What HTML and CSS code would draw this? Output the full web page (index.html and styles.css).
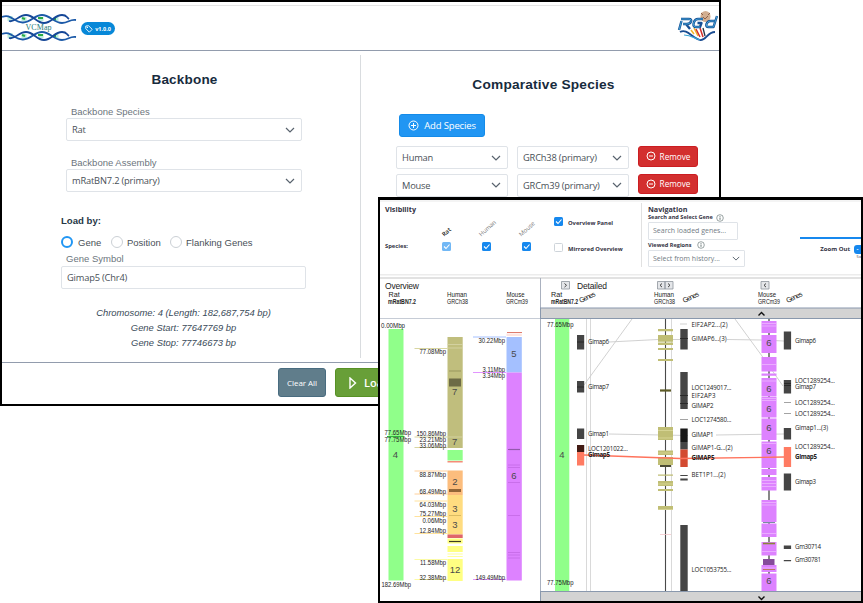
FILE: index.html
```html
<!DOCTYPE html>
<html lang="en">
<head>
<meta charset="utf-8">
<title>VCMap</title>
<link rel="stylesheet" href="styles.css">
</head>
<body>
<svg width="0" height="0" class="defs">
  <symbol id="chev" viewBox="0 0 10 6"><path d="M1 1l4 4 4-4" fill="none" stroke="#59636e" stroke-width="1.2"/></symbol>
  <symbol id="info" viewBox="0 0 8 8"><circle cx="4" cy="4" r="3.3" fill="none" stroke="#566" stroke-width=".6"/><path d="M4 3.5v2.3M4 2v.8" stroke="#455" stroke-width=".8"/></symbol>
  <symbol id="minus" viewBox="0 0 10 10"><circle cx="5" cy="5" r="4" fill="none" stroke="#fff"/><path d="M3 5h4" stroke="#fff"/></symbol>
  <symbol id="dna" viewBox="0 0 75 10">
    <path d="M8 2v5M22 3v4M39 3v4M54 3v4" stroke="#b9ecdc" stroke-width="5"/>
    <path d="M20 4l3 1M36 4h5M53 3v3" stroke="#2aaa44" stroke-width="2"/>
    <path d="M0 3C9-1 12 9 21 8.500S32 1 40 1 52 9 60 9c7 0 7-4 14-3" fill="none" stroke="#1c5aa8" stroke-width="1.800"/>
    <path d="M7 7C13 9 16 1 24 1s10 8 18 8S52 1 60 1c5 0 4 2 7 4" fill="none" stroke="#164797" stroke-width="1.800"/>
  </symbol>
</svg>

<main class="window config">
  <header class="topbar">
    <div class="brand">
      <svg class="logo" width="75" height="28" viewBox="0 0 75 28">
        <use href="#dna" y="0" width="75" height="10"/>
        <use href="#dna" y="17" width="75" height="10"/>
        <text x="23.500" y="16" textLength="26" class="logo-text">VCMap</text>
      </svg>
      <span class="version">
        <svg width="8" height="8" viewBox="0 0 8 8"><path d="M.8 1v2.600L4.300 7.200l2.900-2.900L3.600.8z" fill="none" stroke="#fff" stroke-width=".9" stroke-linejoin="round"/><circle cx="2.400" cy="2.400" r=".6" fill="#fff"/></svg>
        v1.0.0
      </span>
    </div>
    <svg class="rgd" width="42" height="32" viewBox="0 0 42 32">
      <ellipse cx="28.500" cy="6.500" rx="5" ry="5.500" fill="#d2ae91"/>
      <path d="M24 3l2 2M33 3l-2 2M26 7l2 2 3-3" stroke="#8b604b" fill="none"/>
      <path d="M14 20l3 4M17 18l4 8" stroke="#f0b629" stroke-width="1.500"/>
      <path d="M19 19l4 8M23 18l3 9" stroke="#d22f2b" stroke-width="1.500"/>
      <path d="M26 18l2 8" stroke="#234" stroke-width="1.300"/>
      <path d="M3 22c7-4 12 6 20 8 6 1 7-8 15-8" fill="none" stroke="#1a4c91" stroke-width="1.800"/>
      <path d="M7 25c7 0 10 3 16 5" fill="none" stroke="#38a3d4" stroke-width="1.200"/>
      <g fill="none" stroke="#174f94" stroke-width="2.400" stroke-linejoin="round"><path d="M4 9h8q3 0 2 2.500t-4 2.500H6M4.500 11L2 20M9 14l4 5M26 9h-5q-3 0-4 3l-.5 2q-.5 3 2.500 3h4l1.500-4h-4M40 6l-3.500 11h-5q-3 0-2-3t4-3h4"/></g>
      <g fill="none" stroke="#4aabdc" stroke-width=".9"><path d="M4 9h8q3 0 2 2.500t-4 2.500H6M4.500 11L2 20M26 9h-5q-3 0-4 3l-.5 2q-.5 3 2.500 3h4M40 6l-3.500 11h-5q-3 0-2-3t4-3h4"/></g>
    </svg>
  </header>

  <div class="columns">
    <section class="backbone">
      <h2>Backbone</h2>
      <div class="field">
        <label>Backbone Species</label>
        <div class="select">Rat<svg width="10" height="6"><use href="#chev"/></svg></div>
      </div>
      <div class="field">
        <label>Backbone Assembly</label>
        <div class="select">mRatBN7.2 (primary)<svg width="10" height="6"><use href="#chev"/></svg></div>
      </div>
      <div class="load">
        <h3>Load by:</h3>
        <div class="radios">
          <span class="radio on"></span><span class="r1">Gene</span>
          <span class="radio"></span><span class="r2">Position</span>
          <span class="radio"></span><span>Flanking Genes</span>
        </div>
        <label>Gene Symbol</label>
        <div class="select symbol">Gimap5 (Chr4)</div>
      </div>
      <div class="summary">
        <p>Chromosome: 4 (Length: 182,687,754 bp)</p>
        <p>Gene Start: 77647769 bp</p>
        <p>Gene Stop: 77746673 bp</p>
      </div>
    </section>
    <section class="comparative">
      <h2>Comparative Species</h2>
      <button class="add"><svg width="11" height="11" viewBox="0 0 11 11"><circle cx="5.500" cy="5.500" r="4.500" fill="none" stroke="#fff"/><path d="M3 5.500h5M5.500 3v5" stroke="#fff"/></svg>Add Species</button>
      <div class="species-row">
        <div class="select">Human<svg width="10" height="6"><use href="#chev"/></svg></div>
        <div class="select">GRCh38 (primary)<svg width="10" height="6"><use href="#chev"/></svg></div>
        <button class="remove"><svg width="10" height="10"><use href="#minus"/></svg>Remove</button>
      </div>
      <div class="species-row">
        <div class="select">Mouse<svg width="10" height="6"><use href="#chev"/></svg></div>
        <div class="select">GRCm39 (primary)<svg width="10" height="6"><use href="#chev"/></svg></div>
        <button class="remove"><svg width="10" height="10"><use href="#minus"/></svg>Remove</button>
      </div>
    </section>
  </div>

  <footer class="actions">
    <button class="clear">Clear All</button>
    <button class="go"><svg width="8" height="12" viewBox="0 0 8 12"><path d="M1 1v10l5.500-5z" fill="none" stroke="#fff" stroke-width="1.400"/></svg>Load</button>
  </footer>
</main>

<section class="window browser">
  <div class="controls">
    <div class="visibility">
      <h4>Visibility</h4>
      <div class="vis-grid">
        <span></span><span class="tilt dark">Rat</span><span class="tilt">Human</span><span class="tilt">Mouse</span>
        <b>Species:</b>
        <i class="check soft"><svg viewBox="0 0 9 9"><path d="M2 4.500l2 2 3.500-4"/></svg></i>
        <i class="check"><svg viewBox="0 0 9 9"><path d="M2 4.500l2 2 3.500-4"/></svg></i>
        <i class="check"><svg viewBox="0 0 9 9"><path d="M2 4.500l2 2 3.500-4"/></svg></i>
      </div>
    </div>
    <div class="toggles">
      <div><i class="check"><svg viewBox="0 0 9 9"><path d="M2 4.500l2 2 3.500-4"/></svg></i><b>Overview Panel</b></div>
      <div><i class="check off"></i><b>Mirrored Overview</b></div>
    </div>
    <div class="navigation">
      <h4>Navigation</h4>
      <div class="cap">Search and Select Gene<svg width="8" height="8"><use href="#info"/></svg></div>
      <div class="input">Search loaded genes...</div>
      <div class="cap second">Viewed Regions<svg width="8" height="8"><use href="#info"/></svg></div>
      <div class="input wide">Select from history...<svg width="8" height="5"><use href="#chev"/></svg></div>
    </div>
    <div class="zoom">
      <div class="track"></div>
      <div class="zoom-row">Zoom Out<span>-</span></div>
      <small>5x</small>
    </div>
  </div>

  <svg class="chart" width="481" height="327" viewBox="380 274 481 327">
    <path d="M380 274.500h481" stroke="#ececec" stroke-width="2"/>
    <path d="M380 278h481" stroke="#d9d9d9" stroke-width="1.500"/>
    <g stroke="#c6ccd6"><path d="M380 318.500h160"/><path d="M540.500 278v323" stroke="#aab1bf"/></g>

    <g class="head">
      <text x="385" y="289" textLength="34" class="big">Overview</text>
      <text x="577" y="289" textLength="30" class="big">Detailed</text>
      <text x="388.500" y="297">Rat</text><text x="388" y="304" textLength="28" lengthAdjust="spacingAndGlyphs" class="s b">mRatBN7.2</text>
      <text x="447" y="297" textLength="20" lengthAdjust="spacingAndGlyphs">Human</text><text x="447" y="304" textLength="21" lengthAdjust="spacingAndGlyphs" class="s">GRCh38</text>
      <text x="506.500" y="297" textLength="18" lengthAdjust="spacingAndGlyphs">Mouse</text><text x="506" y="304" textLength="22" lengthAdjust="spacingAndGlyphs" class="s">GRCm39</text>
      <text x="551" y="297">Rat</text><text x="551" y="304" textLength="27" lengthAdjust="spacingAndGlyphs" class="s b">mRatBN7.2</text>
      <text x="654" y="297" textLength="20" lengthAdjust="spacingAndGlyphs">Human</text><text x="654" y="304" textLength="21" lengthAdjust="spacingAndGlyphs" class="s">GRCh38</text>
      <text x="758" y="297" textLength="18" lengthAdjust="spacingAndGlyphs">Mouse</text><text x="758" y="304" textLength="22" lengthAdjust="spacingAndGlyphs" class="s">GRCm39</text>
      <text transform="translate(580.500 303) rotate(-25)" textLength="17">Genes</text>
      <text transform="translate(684 303) rotate(-25)" textLength="17">Genes</text>
      <text transform="translate(787.500 303) rotate(-25)" textLength="17">Genes</text>
    </g>
    <g fill="#e4e6e9" stroke="#8e949c" stroke-width=".8"><path d="M561.500 281.500h8v7.500h-8zM657.500 281.500h7.500v7.500h-7.500zM665 281.500h8v7.500h-8zM761 281.500h8v7.500h-8z"/></g>
    <path d="M564.500 283.500l2 1.800-2 1.800M662 283.500l-2 1.800 2 1.800M668 283.500l2 1.800-2 1.800M766 283.500l-2 1.800 2 1.800" fill="none" stroke="#333" stroke-width=".9"/>

    <!-- overview: chromosome bars -->
    <rect x="388.500" y="329" width="15" height="251.500" fill="#90ff8a"/>
    <path d="M387 436.500h17.500" stroke="#32b43c"/>
    <g>
      <rect x="447.500" y="337" width="15.200" height="111" fill="#c0be7d"/>
      <path d="M447.500 344.500h15.200M447.500 348h15.200M447.500 437h15.200" stroke="#d8d6aa" stroke-width=".8"/>
      <path d="M449 371h12" stroke="#99975f"/>
      <rect x="449" y="378.500" width="12" height="8" fill="#6d6b46"/>
      <rect x="447.500" y="450" width="15.200" height="10.500" fill="#90ff8a"/>
      <rect x="447.500" y="461" width="15.200" height="1.500" fill="#f58c78"/>
      <rect x="447.500" y="470.500" width="15.200" height="24.500" fill="#fcbd7d"/>
      <rect x="449" y="489" width="12" height="3" fill="#936637"/>
      <rect x="447.500" y="495" width="15.200" height="39.500" fill="#ffdc80"/>
      <path d="M449 515.500h12" stroke="#d1b35c" stroke-width=".8"/>
      <rect x="447.500" y="534.500" width="15.200" height="3.500" fill="#e0656a"/>
      <rect x="447.500" y="538.500" width="15.200" height="5" fill="#ffff82"/>
      <path d="M449 541.500h12" stroke="#3d3c25" stroke-width="1.200"/>
      <rect x="447.500" y="546" width="15.200" height="6" fill="#ffff82"/>
      <path d="M447.500 554h15.200M447.500 556.500h15.200" stroke="#ffff9d"/>
      <rect x="447.500" y="559" width="15.200" height="22" fill="#ffff82"/>
    </g>
    <g>
      <path d="M507 332.500h15" stroke="#de7c6e"/><rect x="506.500" y="333.500" width="15.300" height="2.500" fill="#ffe4df"/>
      <rect x="506.500" y="337" width="15.300" height="35.500" fill="#a4c0ff"/>
      <rect x="506.500" y="372.500" width="15.300" height="208" fill="#dd82ff"/>
      <path d="M508 449.500h12" stroke="#9359ac" stroke-width="1.200"/>
      <path d="M508 465h12M508 467.500h12M508 482.500h12M508 515.500h12M508 552.500h12M508 555h12M508 558h12" stroke="#c46ae4" stroke-width=".8"/>
    </g>
    <g stroke="#d8d6a2" stroke-width="1.100"><path d="M414.500 348.500h33M414.500 437h33M414.500 447.500h33"/></g>
    <g stroke="#ffd09c"><path d="M414.500 471h33M414.500 494h33"/></g>
    <g stroke="#ffe29c"><path d="M414.500 501h33M414.500 516.500h33M414.500 533.500h33"/></g>
    <g stroke="#fbfba5"><path d="M414.500 559.500h33M414.500 579.500h33"/></g>
    <path d="M473 337h33" stroke="#a4c0ff"/><path d="M473 372.500h33M473 579.500h33" stroke="#e295ff"/>
    <g class="pos">
      <text x="381" y="327.500" textLength="24" lengthAdjust="spacingAndGlyphs">0.00Mbp</text>
      <text x="384.500" y="435" textLength="26.500" lengthAdjust="spacingAndGlyphs">77.65Mbp</text>
      <text x="384.500" y="442" textLength="26.500" lengthAdjust="spacingAndGlyphs">77.75Mbp</text>
      <text x="381.500" y="586.500" textLength="29.500" lengthAdjust="spacingAndGlyphs">182.69Mbp</text>
      <g class="end">
        <text x="446" y="354" textLength="26.500" lengthAdjust="spacingAndGlyphs">77.08Mbp</text>
        <text x="446" y="435.500" textLength="29.500" lengthAdjust="spacingAndGlyphs">150.86Mbp</text>
        <text x="446" y="442" textLength="26.500" lengthAdjust="spacingAndGlyphs">23.21Mbp</text>
        <text x="446" y="447.500" textLength="26.500" lengthAdjust="spacingAndGlyphs">33.06Mbp</text>
        <text x="446" y="476.500" textLength="26.500" lengthAdjust="spacingAndGlyphs">88.87Mbp</text>
        <text x="446" y="494" textLength="26.500" lengthAdjust="spacingAndGlyphs">68.49Mbp</text>
        <text x="446" y="507" textLength="26.500" lengthAdjust="spacingAndGlyphs">64.03Mbp</text>
        <text x="446" y="515.500" textLength="26.500" lengthAdjust="spacingAndGlyphs">75.27Mbp</text>
        <text x="446" y="522.500" textLength="23.500" lengthAdjust="spacingAndGlyphs">0.06Mbp</text>
        <text x="446" y="533" textLength="26.500" lengthAdjust="spacingAndGlyphs">12.84Mbp</text>
        <text x="446" y="565" textLength="26" lengthAdjust="spacingAndGlyphs">11.58Mbp</text>
        <text x="446" y="580" textLength="26.500" lengthAdjust="spacingAndGlyphs">32.38Mbp</text>
        <text x="505" y="342.500" textLength="26.500" lengthAdjust="spacingAndGlyphs">30.22Mbp</text>
        <text x="505" y="371.500" textLength="22.500" lengthAdjust="spacingAndGlyphs">3.11Mbp</text>
        <text x="505" y="378" textLength="22.500" lengthAdjust="spacingAndGlyphs">3.34Mbp</text>
        <text x="505" y="580" textLength="29.500" lengthAdjust="spacingAndGlyphs">149.49Mbp</text>
      </g>
    </g>
    <g class="num">
      <text x="395.500" y="457.500">4</text>
      <text x="454.700" y="395">7</text><text x="454.700" y="444.500">7</text>
      <text x="455" y="485">2</text><text x="455" y="511.500">3</text><text x="455" y="528">3</text><text x="455" y="572.500">12</text>
      <text x="514" y="357">5</text><text x="514" y="479">6</text>
    </g>

    <!-- detailed: guides and ortholog links -->
    <g stroke="#d9d9d9"><path d="M586.500 319v272M590.500 319v272M671.500 319v272"/></g>
    <g fill="none" stroke="#ccc" stroke-width=".9">
      <path d="M609 342L658 339.500H680M584 385L632 319M609 434L688 435.500M735 319L762 356L783 386M727 339.500L762 340L784 341M716 435L784 434M680 324h7"/>
    </g>
    <rect x="555" y="319" width="14.300" height="272" fill="#90ff8a"/>

    <!-- detailed: human chromosome -->
    <path d="M665.500 319v272" stroke="#4a4a4a" stroke-width="1.100"/>
    <g fill="#c0be75">
      <path d="M658 329h15v2.200h-15zM658 335h15v6.800h-15zM658 342.500h15v2.500h-15zM658 348h15v2h-15zM658 359h15v2h-15zM658 427h15v13h-15zM658 450.500h15v4.500h-15zM658 457h15v8h-15zM658 474.500h15v1.300h-15zM658 481h15v5h-15zM658 489h15v2h-15zM658 506h15v4h-15z"/>
    </g>
    <path d="M658 430.500h15M658 438h15M658 453h15M658 484h15M658 509.500h15" stroke="#dad89a" stroke-width=".8"/>
    <path d="M660 390.500h11" stroke="#5d5b27" stroke-width="2.200"/><path d="M660 466h11" stroke="#4b4b35" stroke-width="2"/>
    <path d="M660 534.500h11" stroke="#f5c6cb" stroke-width=".8"/>

    <!-- detailed: mouse chromosome -->
    <path d="M769 319v272" stroke="#555" stroke-width="1.400"/>
    <g fill="#dd82ff">
      <path d="M761.500 321h15v12h-15zM761.500 335h15v18h-15zM761.500 357h15v14.500h-15zM761.500 373.500h15v2.200h-15zM761.500 378h15v18.500h-15zM761.500 397h15v20.500h-15zM761.500 418.500h15v21.500h-15zM761.500 441.500h15v26.500h-15zM761.500 469h15v6h-15zM761.500 477h15v13.500h-15zM761.500 500h15v22h-15zM761.500 523.500h15v13.500h-15zM761.500 542h15v13.500h-15zM761.500 565h15v7h-15zM761.500 573.500h15v17.500h-15z"/>
    </g>
    <path d="M762 323.500h14M762 326h14M762 364.500h14M762 381h14M762 398.500h14M762 400.500h14M762 443.500h14M762 480.500h14M762 483.500h14M762 486.500h14M762 502.500h14M762 505h14M762 533.500h14M762 551.500h14M762 568h14" stroke="#edb8ff" stroke-width=".8"/>
    <path d="M763 543.500h12" stroke="#8a8638" stroke-width="1.600"/><path d="M763 522.500h12" stroke="#798da1"/><path d="M763 569.500h12" stroke="#bd765f"/>
    <rect x="763" y="559" width="11.500" height="6" fill="#854b9a"/>

    <!-- detailed: genes -->
    <g fill="#454545">
      <path d="M577 335h7.200v14.500h-7.200zM577 381h7.200v11.500h-7.200zM577 428.500h7.200v10.500h-7.200z"/>
      <path d="M680.300 329h7.400v20.500h-7.400zM680.300 372h7.400v37h-7.400zM680.300 442h7.400v7.500h-7.400zM680.300 475h7.400v1h-7.400zM680.300 478.500h7.400v2h-7.400zM680.300 525h7.400v66h-7.400z"/>
      <path d="M783.800 331.500h7.300v18h-7.300zM783.800 380h7.300v13.500h-7.300zM783.800 428h7.300v11.500h-7.300zM783.800 473.500h7.300v17h-7.300zM783.800 545.500h7.300v3.500h-7.300zM783.800 560h7.300v1.200h-7.300z"/>
    </g>
    <path d="M577 342h7M577 387h7M680 338.500h8M680 395.500h8M680 403.500h8M784 383.500h7M784 385.500h7" stroke="#222" stroke-width=".8"/>
    <rect x="680.300" y="428.500" width="7.400" height="13.500" fill="#181818"/>
    <path d="M680 419.500h8M784 402.500h7M784 413.500h7" stroke="#999" stroke-width=".9"/>
    <rect x="577" y="445" width="7.200" height="7" fill="#421b14"/><rect x="577" y="452" width="7.200" height="13.500" fill="#ff7b62"/>
    <rect x="680.300" y="449.500" width="7.400" height="17.500" fill="#d34a31"/><rect x="783.800" y="447" width="7.300" height="20" fill="#ff7b62"/>
    <path d="M584 455L680 458.500L784 457" fill="none" stroke="#ff735c" stroke-width="1.300"/>

    <g class="gene">
      <text x="588" y="344" textLength="21">Gimap6</text><text x="588" y="388.700" textLength="21">Gimap7</text>
      <text x="588" y="435.700" textLength="21">Gimap1</text><text x="588" y="450.600" textLength="40">LOC1201022...</text><text x="588" y="457" textLength="22" class="b">Gimap5</text>
      <text x="691.500" y="326.500" textLength="36">EIF2AP2...(2)</text><text x="691.500" y="341" textLength="35">GIMAP6...(3)</text>
      <text x="691.500" y="390" textLength="40">LOC1249017...</text><text x="691.500" y="397.700" textLength="24">EIF2AP3</text>
      <text x="691.500" y="407.700" textLength="22">GIMAP2</text><text x="691.500" y="421.700" textLength="40">LOC1274580...</text>
      <text x="691.500" y="437" textLength="22">GIMAP1</text><text x="691.500" y="449.500" textLength="41">GIMAP1-G...(2)</text>
      <text x="691.500" y="460" textLength="23" class="b">GIMAP5</text><text x="691.500" y="477" textLength="34">BET1P1...(2)</text>
      <text x="691.500" y="572" textLength="40">LOC1053755...</text>
      <text x="795" y="342.500" textLength="21">Gimap6</text><text x="795" y="382.700" textLength="40">LOC1289254...</text><text x="795" y="389.300" textLength="21">Gimap7</text>
      <text x="795" y="404.500" textLength="40">LOC1289254...</text><text x="795" y="415.500" textLength="40">LOC1289254...</text>
      <text x="795" y="430" textLength="33">Gimap1...(3)</text><text x="795" y="449" textLength="40">LOC1289254...</text>
      <text x="795" y="459" textLength="22" class="b">Gimap5</text><text x="795" y="484" textLength="21">Gimap3</text>
      <text x="795" y="549" textLength="26">Gm30714</text><text x="795" y="562.300" textLength="26">Gm30781</text>
    </g>
    <g class="pos"><text x="547" y="326.500" textLength="26.500" lengthAdjust="spacingAndGlyphs">77.65Mbp</text><text x="547" y="584.500" textLength="26.500" lengthAdjust="spacingAndGlyphs">77.75Mbp</text></g>
    <g class="num"><text x="562" y="457.500">4</text><text x="769" y="346">6</text><text x="769" y="392">6</text><text x="769" y="412">6</text><text x="769" y="431">6</text><text x="769" y="454">6</text><text x="769" y="583.500">6</text></g>

    <g fill="#d3d3d3" stroke="#8998ad"><rect x="540.500" y="308" width="321" height="10.500"/><rect x="540.500" y="591.500" width="321" height="10"/></g>
    <path d="M758.500 315.500l3-3 3 3M758.500 596.500l3 3 3-3" fill="none" stroke="#111" stroke-width="1.400"/>
  </svg>
</section>
</body>
</html>
```
FILE: styles.css
```css
* { box-sizing: border-box; }
body { margin: 0; width: 863px; height: 603px; overflow: hidden; position: relative; background: #fff; color: #495057; font: 9.5px "Open Sans", sans-serif; }
h2, h3, h4, p { margin: 0; }
button { font: 9.5px "Open Sans", sans-serif; color: #fff; border: 1px solid; border-radius: 3px; padding: 0; display: flex; align-items: center; justify-content: center; white-space: nowrap; }
.defs { position: absolute; }
.window { border: 2px solid #000; background: #fff; overflow: hidden; }

.config { width: 721px; height: 406px; display: flex; flex-direction: column; }
.topbar { height: 49px; flex: none; border-bottom: 1.5px solid #929cad; display: flex; justify-content: space-between; background: linear-gradient(#fff 3px, #e5e5e5 3px, #e5e5e5 4px, #fff 4px); }
.brand { display: flex; }
.logo { margin-top: 12px; }
.logo-text { font: 8px "Liberation Serif", serif; fill: #257b78; }
.version { margin: 20px 0 0 4px; height: 13px; width: 34px; border-radius: 7px; background: #0788d8; color: #fff; font-weight: 700; font-size: 5.5px; display: flex; align-items: center; justify-content: center; gap: 2px; }
.rgd { margin: 8px 0 0; }

.columns { height: 311px; display: grid; grid-template-columns: 359px 1fr; }
h2 { font: bold 13.7px "Liberation Sans", sans-serif; color: #172b3d; text-align: center; letter-spacing: .2px; line-height: 16px; }
.backbone { padding-top: 17px; margin-top: 4px; height: 303px; border-right: 1.5px solid #d9dcdf; font-family: "Liberation Sans", sans-serif; }
.backbone h2 { margin-left: 7px; font-size: 13.5px; }
label { display: block; font: 9.5px/11px "Liberation Sans", sans-serif; color: #6c757d; padding-left: 5px; }
.field { width: 236px; margin: 18px 0 0 64px; }
.field + .field { margin-top: 16px; }
.select { height: 23px; border: 1px solid #dfe3e8; border-radius: 2px; display: flex; align-items: center; justify-content: space-between; padding: 0 6px 0 5px; font: 9.3px "Open Sans", sans-serif; letter-spacing: -.18px; margin-top: 1px; white-space: nowrap; }
.load { margin: 23px 0 0 59px; }
h3 { font: bold 9.6px/12px "Liberation Sans", sans-serif; color: #263746; }
.radios { display: flex; align-items: center; margin: 8px 0 5px; height: 14px; font: 9.5px "Liberation Sans", sans-serif; }
.radio { width: 12px; height: 12px; border: 1px solid #cbd0d5; border-radius: 50%; margin-right: 4px; }
.radio.on { border: 2px solid #2196f3; margin-right: 5px; }
.r1 { width: 33px; } .r2 { width: 43px; }
.load label { line-height: 10px; }
.symbol { width: 245px; margin-top: 2px; }
.summary { text-align: center; margin: 16px 0 0 5px; font: italic 9.4px/15.2px "Liberation Sans", sans-serif; color: #394a58; }
.comparative { padding-top: 26px; }
.comparative h2 { margin-left: 7px; }
.add { margin: 21px 0 9px 38px; width: 86px; height: 23px; background: #2196f3; border-color: #148be9; gap: 5px; letter-spacing: -.15px; }
.species-row { display: grid; grid-template-columns: 112px 112px 60px; gap: 9px; margin: 0 0 4.500px 35px; height: 23px; }
.species-row .select { margin: 0; }
.remove { height: 20.500px; background: #d32f2f; border-color: #cb1d22; font-size: 8.2px; gap: 4px; }
.actions { border-top: 1.5px solid #929cad; height: 42px; padding: 5px 0 0 276px; display: flex; gap: 9px; }
.clear { width: 48px; height: 29px; background: #607d8b; border-color: #496c80; font-size: 8px; letter-spacing: -.05px; }
.go { width: 90px; height: 29px; background: #689f38; border-color: #579125; font-size: 11px; font-weight: 600; justify-content: flex-start; padding-left: 13px; gap: 7px; }

.browser { position: absolute; left: 378px; top: 197px; width: 485px; height: 406px; border-width: 3px 2px 2px; color: #334; }
.controls { height: 74px; display: grid; grid-template-columns: 174px 88px 145px 1fr; border-top: 2px solid #f4f4f4; }
.controls h4 { font: bold 7.2px/10px "Open Sans", sans-serif; }
.controls b { font-size: 5.8px; white-space: nowrap; }
.visibility { padding: 2px 0 0 5px; }
.vis-grid { display: grid; grid-template-columns: 57px 40px 40px 20px; grid-template-rows: 27px 10px; align-items: center; }
.tilt { font-size: 6px; transform: rotate(-42deg); transform-origin: 6px 5px; line-height: 8px; color: #777; position: relative; left: -3px; top: 3px; }
.dark { color: #111; font-weight: 600; left: 0; }
.check { display: block; width: 9px; height: 9px; border-radius: 1.500px; background: #1688ee; }
.check svg { display: block; width: 9px; fill: none; stroke: #fff; stroke-width: 1.1; }
.check.soft { background: #72b8f5; }
.check.off { background: #fff; border: 1px solid #ced4da; }
.toggles { padding-top: 15px; display: flex; flex-direction: column; gap: 17px; }
.toggles div { display: flex; height: 9px; gap: 5px; align-items: flex-start; }
.toggles b { line-height: 12px; }
.navigation { margin: 1px 0 8px -1px; border-left: 1px solid #e1e1e1; padding: 1px 0 0 6px; height: 64px; }
.cap { font-size: 5.6px; font-weight: 700; height: 8px; line-height: 7px; display: flex; gap: 3px; white-space: nowrap; }
.second { margin-top: 1px; height: 9px; line-height: 9px; gap: 5px; }
.input { width: 90px; height: 17.500px; border: 1px solid #dfe3e8; border-radius: 1px; padding: 0 4px; display: flex; align-items: center; justify-content: space-between; font-size: 7px; color: #727b84; white-space: nowrap; }
.wide { width: 97px; }
.zoom { padding: 35px 0 0 13px; }
.track { height: 2px; background: #1688ee; }
.zoom-row { display: flex; align-items: center; justify-content: flex-end; height: 10px; margin-top: 5px; gap: 4px; font-size: 6px; font-weight: 700; white-space: nowrap; }
.zoom-row span { width: 7px; height: 9px; line-height: 8px; background: #1688ee; color: #fff; border-radius: 3px 0 0 3px; text-align: center; }
.zoom small { display: block; text-align: right; font-size: 4px; line-height: 5px; }

.chart { display: block; }
.chart text { font-family: "Liberation Sans", sans-serif; fill: #222; }
.head text { font-size: 7.2px; }
.chart .big { font-size: 8.5px; }
.chart .s { font-size: 6.3px; }
.chart .b { font-weight: 700; }
.pos text { font-size: 7px; }
.end text { text-anchor: end; }
.num text { font-size: 9.5px; text-anchor: middle; fill: #4a4a4a; }
.chart .gene text { font-family: "Open Sans", sans-serif; font-size: 6.2px; }
```
